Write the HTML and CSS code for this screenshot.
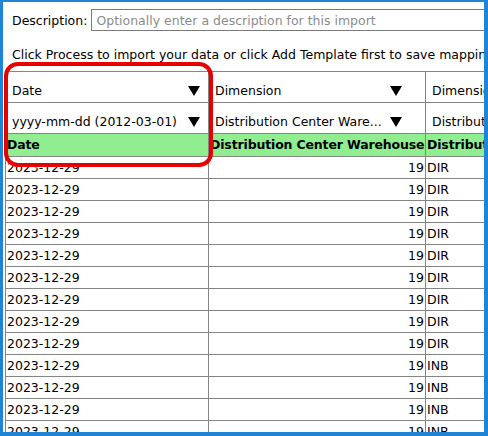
FILE: index.html
```html
<!DOCTYPE html>
<html>
<head>
<meta charset="utf-8">
<link rel="stylesheet" href="styles.css">
</head>
<body>
<div class="frame">
  <div class="desc-row">
    <label class="desc-label" for="desc">Description:</label>
    <input id="desc" class="desc-input" type="text" placeholder="Optionally enter a description for this import">
  </div>
  <p class="hint">Click Process to import your data or click Add Template first to save mapping settings for later use.</p>
  <table class="grid">
    <colgroup><col class="c1"><col class="c2"><col class="c3"></colgroup>
    <tr class="map-row">
      <td><div class="sel sel-1"><span class="sel-text">Date</span><svg class="arrow" viewBox="0 0 12 10"><polygon points="0,0 12,0 6,10"/></svg></div></td>
      <td><div class="sel sel-2"><span class="sel-text">Dimension</span><svg class="arrow" viewBox="0 0 12 10"><polygon points="0,0 12,0 6,10"/></svg></div></td>
      <td><div class="sel sel-3"><span class="sel-text">Dimension</span><svg class="arrow" viewBox="0 0 12 10"><polygon points="0,0 12,0 6,10"/></svg></div></td>
    </tr>
    <tr class="map-row">
      <td><div class="sel sel-1"><span class="sel-text">yyyy-mm-dd (2012-03-01)</span><svg class="arrow" viewBox="0 0 12 10"><polygon points="0,0 12,0 6,10"/></svg></div></td>
      <td><div class="sel sel-2"><span class="sel-text">Distribution Center Ware...</span><svg class="arrow" viewBox="0 0 12 10"><polygon points="0,0 12,0 6,10"/></svg></div></td>
      <td><div class="sel sel-3"><span class="sel-text">Distribution Center Type</span><svg class="arrow" viewBox="0 0 12 10"><polygon points="0,0 12,0 6,10"/></svg></div></td>
    </tr>
    <tr class="head-row">
      <th>Date</th><th>Distribution Center Warehouse</th><th>Distribution Center Type</th>
    </tr>
    <tr><td>2023-12-29</td><td class="num">19</td><td>DIR</td></tr>
    <tr><td>2023-12-29</td><td class="num">19</td><td>DIR</td></tr>
    <tr><td>2023-12-29</td><td class="num">19</td><td>DIR</td></tr>
    <tr><td>2023-12-29</td><td class="num">19</td><td>DIR</td></tr>
    <tr><td>2023-12-29</td><td class="num">19</td><td>DIR</td></tr>
    <tr><td>2023-12-29</td><td class="num">19</td><td>DIR</td></tr>
    <tr><td>2023-12-29</td><td class="num">19</td><td>DIR</td></tr>
    <tr><td>2023-12-29</td><td class="num">19</td><td>DIR</td></tr>
    <tr><td>2023-12-29</td><td class="num">19</td><td>DIR</td></tr>
    <tr><td>2023-12-29</td><td class="num">19</td><td>INB</td></tr>
    <tr><td>2023-12-29</td><td class="num">19</td><td>INB</td></tr>
    <tr><td>2023-12-29</td><td class="num">19</td><td>INB</td></tr>
    <tr><td>2023-12-29</td><td class="num">19</td><td>INB</td></tr>
    <tr><td>2023-12-29</td><td class="num">19</td><td>INB</td></tr>
  </table>
</div>
<div class="highlight"></div>
</body>
</html>
```
FILE: styles.css
```css
html, body {
  margin: 0;
  padding: 0;
  background: #ffffff;
}
body {
  font-family: "DejaVu Sans", sans-serif;
  font-size: 12.5px;
  color: #000;
  position: relative;
}
.frame {
  box-sizing: border-box;
  width: 488px;
  height: 436px;
  border-style: solid;
  border-color: #1f84d6;
  border-width: 2px 4px 4px 3px;
  overflow: hidden;
  background: #fff;
  white-space: nowrap;
}
.desc-row {
  display: flex;
  align-items: center;
  gap: 4px;
  padding: 7px 0 0 9px;
}
.desc-label {
  font-size: 12.5px;
}
.desc-input {
  box-sizing: border-box;
  flex: none;
  width: 520px;
  height: 22px;
  margin: 0;
  padding: 0 4px;
  border: 1px solid #7a7a7a;
  border-radius: 0;
  font-family: inherit;
  font-size: 12.5px;
  outline: none;
}
.desc-input::placeholder {
  color: #8c8c8c;
  opacity: 1;
}
.hint {
  margin: 0;
  padding: 16px 0 0 9px;
  height: 24px;
  line-height: 16px;
  overflow: hidden;
}
.grid {
  border-collapse: collapse;
  table-layout: fixed;
  width: 640px;
  margin-left: 2px;
}
.c1 { width: 203px; }
.c2 { width: 217px; }
.c3 { width: 220px; }
.grid td, .grid th {
  border: 1px solid #858585;
  padding: 0 1px;
  height: 21px;
  line-height: 16px;
  overflow: hidden;
  text-align: left;
}
.grid td.num {
  text-align: right;
}
.map-row td {
  height: 30px;
  padding: 0;
}
.head-row th {
  background: #90ee90;
  font-weight: bold;
  height: 22px;
  letter-spacing: -0.15px;
}
.sel {
  box-sizing: border-box;
  display: flex;
  align-items: center;
  justify-content: space-between;
  height: 30px;
  padding-top: 8px;
}
.sel-1 { padding-left: 6px; padding-right: 8px; }
.sel-2 { padding-left: 6px; padding-right: 23px; }
.sel-3 { padding-left: 6px; padding-right: 23px; }
.sel-text {
  overflow: hidden;
}
.arrow {
  width: 12px;
  height: 10px;
  flex: none;
  fill: #000;
}
.highlight {
  position: absolute;
  left: 4px;
  top: 62px;
  width: 209px;
  height: 105px;
  box-sizing: border-box;
  border: 4px solid #e60000;
  border-radius: 14px;
  pointer-events: none;
}
```
